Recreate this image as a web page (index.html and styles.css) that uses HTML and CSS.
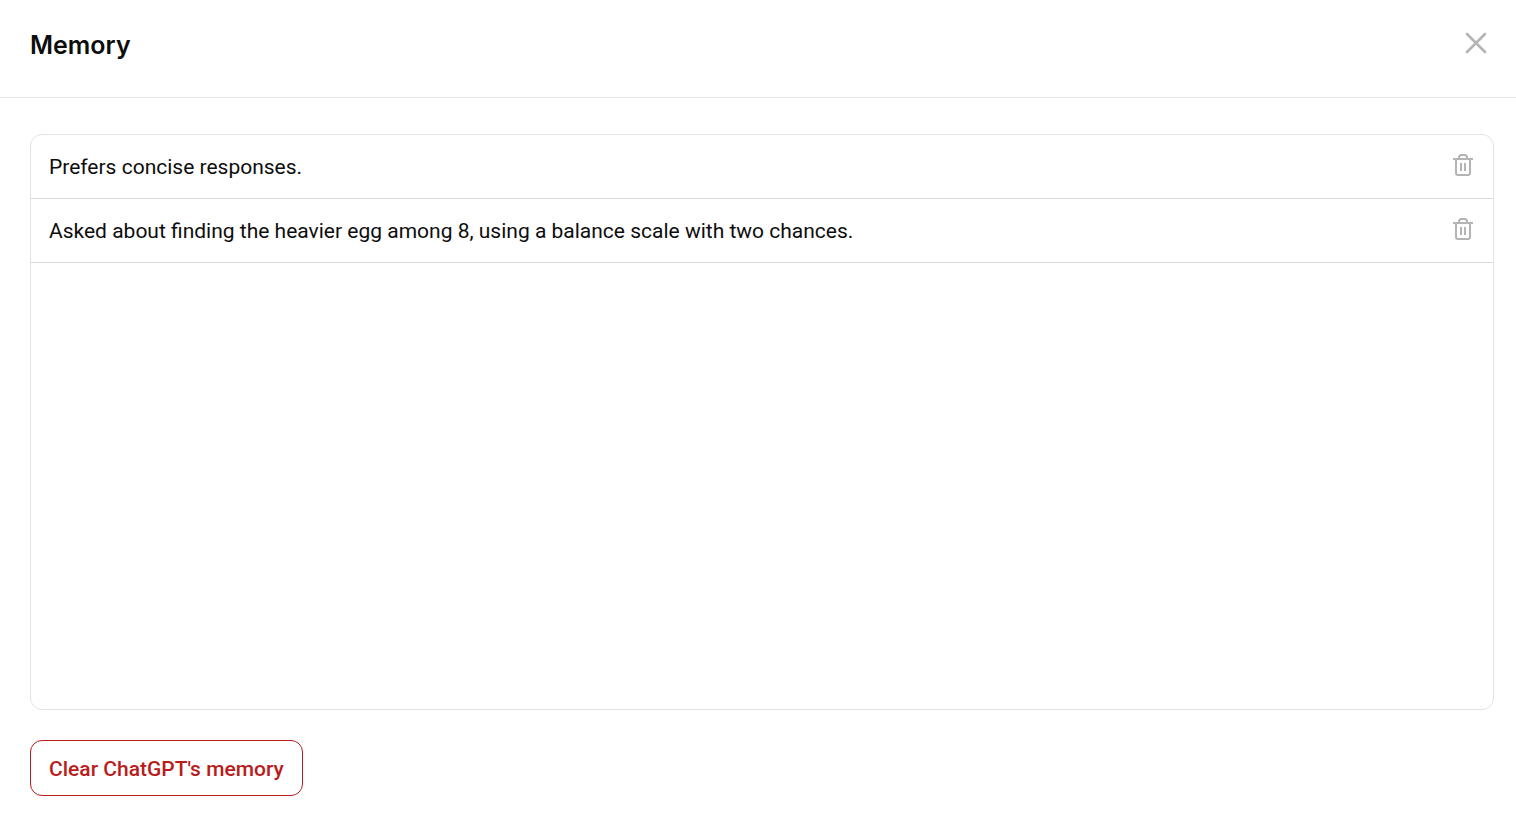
FILE: index.html
```html
<!DOCTYPE html>
<html lang="en">
<head>
  <meta charset="UTF-8" />
  <meta name="viewport" content="width=device-width, initial-scale=1" />
  <title>Memory</title>
  <link rel="stylesheet" href="styles.css">
</head>
<body>
  <header>
    <h1>Memory</h1>
    <button type="button" class="icon-btn" aria-label="Close">
      <svg width="24" height="24" viewBox="0 0 24 24" fill="none" stroke="currentColor" stroke-width="2.6" stroke-linecap="round">
        <path d="M3 3L21 21M21 3L3 21" />
      </svg>
    </button>
  </header>

  <main>
    <ul class="memories">
      <li>
        <span>Prefers concise responses.</span>
        <button type="button" class="icon-btn" aria-label="Delete memory">
          <svg width="24" height="24" viewBox="0 0 24 24" fill="none" stroke="currentColor" stroke-width="2">
            <path d="M2 6H22M5 6V20Q5 22 7 22H17Q19 22 19 20V6M8 6V4.500Q8 2 10.500 2H13.500Q16 2 16 4.500V6M10 10V18M14 10V18" />
          </svg>
        </button>
      </li>
      <li>
        <span>Asked about finding the heavier egg among 8, using a balance scale with two chances.</span>
        <button type="button" class="icon-btn" aria-label="Delete memory">
          <svg width="24" height="24" viewBox="0 0 24 24" fill="none" stroke="currentColor" stroke-width="2">
            <path d="M2 6H22M5 6V20Q5 22 7 22H17Q19 22 19 20V6M8 6V4.500Q8 2 10.500 2H13.500Q16 2 16 4.500V6M10 10V18M14 10V18" />
          </svg>
        </button>
      </li>
    </ul>

    <button type="button" class="clear-btn">Clear ChatGPT's memory</button>
  </main>
</body>
</html>
```
FILE: styles.css
```css
* {
  box-sizing: border-box;
}

body {
  display: flex;
  flex-direction: column;
  min-height: 100vh;
  margin: 0;
  background-color: #ffffff;
  color: #0d0d0d;
  font-family: Roboto, 'Liberation Sans', sans-serif;
  font-size: 21px;
  line-height: 34px;
}

header {
  display: flex;
  justify-content: space-between;
  align-items: flex-start;
  padding: 28px 28px 35px 30px;
  border-bottom: 1px solid #e3e3e3;
}

h1 {
  margin: 0;
  font-family: Inter, sans-serif;
  font-size: 25px;
  font-weight: 600;
}

button {
  font: inherit;
  cursor: pointer;
}

.icon-btn {
  padding: 3px 0;
  border: none;
  background: none;
  color: #b4b4b4;
}

.icon-btn svg {
  display: block;
}

main {
  flex: 1;
  display: flex;
  flex-direction: column;
  align-items: flex-start;
  gap: 30px;
  padding: 36px 22px 20px 30px;
}

.memories {
  flex: 1;
  align-self: stretch;
  margin: 0;
  padding: 0;
  list-style: none;
  border: 1px solid #e3e3e3;
  border-radius: 12px;
}

.memories li {
  display: flex;
  justify-content: space-between;
  align-items: flex-start;
  gap: 18px;
  padding: 15px 18px 14px;
  border-bottom: 1px solid #d9d9d9;
}

.clear-btn {
  padding: 11px 18px 9px;
  border: 1px solid #b91c1c;
  border-radius: 12px;
  background: none;
  color: #b91c1c;
  font-weight: 500;
}
```
